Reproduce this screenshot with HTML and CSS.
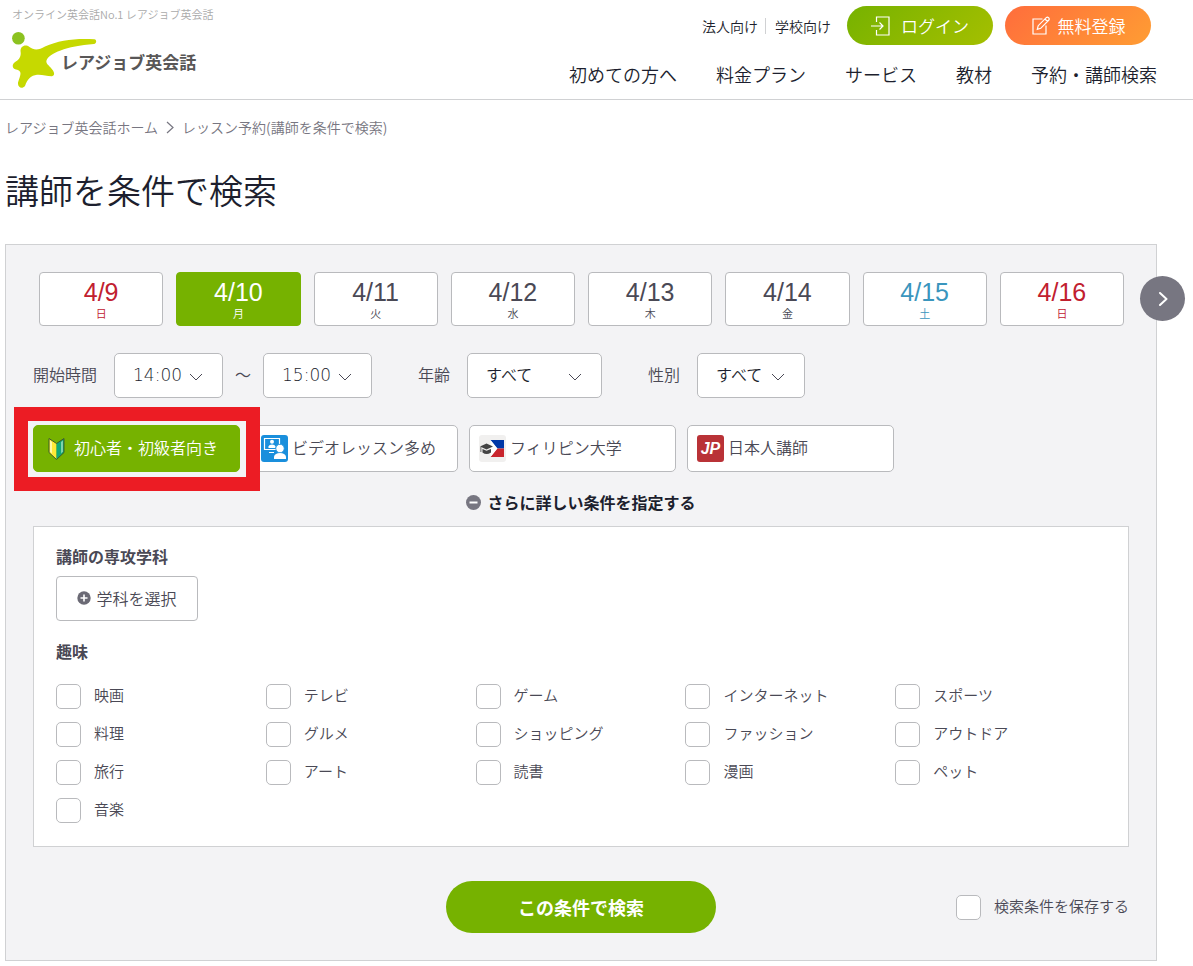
FILE: index.html
```html
<!DOCTYPE html>
<html lang="ja">
<head>
<meta charset="utf-8">
<meta name="viewport" content="width=device-width, initial-scale=1">
<title>レッスン予約(講師を条件で検索)</title>
<link rel="stylesheet" href="styles.css">
</head>
<body>
<header class="header">
  <div class="brand">
    <p class="tagline">オンライン英会話No.1 レアジョブ英会話</p>
    <a class="logo" href="#">
      <svg class="logo-mark" viewBox="12 33 85 56" aria-hidden="true">
        <circle cx="18.4" cy="39.3" r="6.3" fill="#8cc220"/>
        <path fill="#c6d900" d="M94.500 40.300C77 39 59 41 45 47.500C39 51 34 51.500 29.500 48C25 44.800 20.500 47.500 20.500 52C21.500 58 19 60.500 14.500 63.500C11.500 66 12.500 70 16 70.500C20.500 71.300 21.300 73.500 19.800 78L18 83.500C17.500 88.500 22 90.500 25 87C27.500 80 31 76.500 37 75.800C42 75.300 47 77.300 52 77.200C54.800 76.800 54.500 74 53 71.500C49.500 66.500 45.500 65 46.500 61.500C49 54.500 66 47 94 45C96.800 44.500 96.800 40.800 94.500 40.300Z"/>
      </svg>
      <span class="logo-text">レアジョブ英会話</span>
    </a>
  </div>
  <div class="header-right">
    <div class="header-top">
      <a class="sub-link" href="#">法人向け</a>
      <a class="sub-link sub-link-split" href="#">学校向け</a>
      <a class="pill pill-login" href="#">
        <svg width="21" height="20" viewBox="0 0 21 20" fill="none" stroke="currentColor" stroke-width="1.200" aria-hidden="true"><path d="M5.500 6V1H18V19H5.500V14M0 10H12M8.500 6.500L12 10L8.500 13.500"/></svg>
        ログイン
      </a>
      <a class="pill pill-register" href="#">
        <svg width="20" height="20" viewBox="0 0 20 20" fill="none" stroke="currentColor" stroke-width="1.200" aria-hidden="true"><path d="M11.500 3H2V18H15V9.500M6.300 13.300L7.200 9.700L15.500 1.400Q16.500 .700 17.600 1.700Q18.700 2.900 17.900 4L9.700 12.300ZM14 3L16.500 5.500"/></svg>
        無料登録
      </a>
    </div>
    <nav class="nav">
      <a href="#">初めての方へ</a>
      <a href="#">料金プラン</a>
      <a href="#">サービス</a>
      <a href="#">教材</a>
      <a href="#">予約・講師検索</a>
    </nav>
  </div>
</header>

<main class="main">
  <nav class="breadcrumb" aria-label="パンくずリスト">
    <a href="#">レアジョブ英会話ホーム</a>
    <svg width="8" height="13" viewBox="0 0 8 13" fill="none" stroke="currentColor" stroke-width="1.200" aria-hidden="true"><path d="M1 1L7 6.500L1 12"/></svg>
    <span>レッスン予約(講師を条件で検索)</span>
  </nav>
  <h1 class="title">講師を条件で検索</h1>

  <form class="panel">
    <div class="dates">
      <button type="button" class="date holiday"><span class="num">4/9</span><span class="day">日</span></button>
      <button type="button" class="date selected" aria-pressed="true"><span class="num">4/10</span><span class="day">月</span></button>
      <button type="button" class="date"><span class="num">4/11</span><span class="day">火</span></button>
      <button type="button" class="date"><span class="num">4/12</span><span class="day">水</span></button>
      <button type="button" class="date"><span class="num">4/13</span><span class="day">木</span></button>
      <button type="button" class="date"><span class="num">4/14</span><span class="day">金</span></button>
      <button type="button" class="date saturday"><span class="num">4/15</span><span class="day">土</span></button>
      <button type="button" class="date holiday"><span class="num">4/16</span><span class="day">日</span></button>
      <button type="button" class="next" aria-label="次の日程">
        <svg width="10" height="14" viewBox="0 0 10 14" fill="none" stroke="currentColor" stroke-width="2" stroke-linecap="round" stroke-linejoin="round" aria-hidden="true"><path d="M2 1L8.500 7L2 13"/></svg>
      </button>
    </div>

    <div class="filters">
      <div class="filter">
        <label for="start">開始時間</label>
        <span class="select time"><select id="start"><option>14:00</option></select><svg class="chevron" viewBox="0 0 14 8" aria-hidden="true"><path d="M1 1L7 7L13 1"/></svg></span>
        <span class="tilde">～</span>
        <span class="select time"><select id="end" aria-label="終了時間"><option>15:00</option></select><svg class="chevron" viewBox="0 0 14 8" aria-hidden="true"><path d="M1 1L7 7L13 1"/></svg></span>
      </div>
      <div class="filter">
        <label for="age">年齢</label>
        <span class="select wide"><select id="age"><option>すべて</option></select><svg class="chevron" viewBox="0 0 14 8" aria-hidden="true"><path d="M1 1L7 7L13 1"/></svg></span>
      </div>
      <div class="filter">
        <label for="sex">性別</label>
        <span class="select"><select id="sex"><option>すべて</option></select><svg class="chevron" viewBox="0 0 14 8" aria-hidden="true"><path d="M1 1L7 7L13 1"/></svg></span>
      </div>
    </div>

    <div class="chips">
      <div class="chip-slot">
        <button type="button" class="chip selected" aria-pressed="true">
          <svg class="chip-icon" viewBox="0 0 27 27" aria-hidden="true"><path fill="#ffe937" d="M6 3.500L13.500 8.500V24.500L6 17.500Z"/><path fill="#12a878" d="M21 3.500L13.500 8.500V24.500L21 17.500Z"/><path fill="#fff8a8" d="M7 5.500L9 7V18.500L7 16.500Z"/><path fill="#7ed3ae" d="M18 7L20 5.500V16.500L18 18.500Z"/><path fill="none" stroke="#3d5b2d" d="M6 3.500L13.500 8.500L21 3.500V17.500L13.500 24.500L6 17.500Z"/></svg>
          <span class="chip-text">初心者・初級者向き</span>
        </button>
        <span class="highlight"></span>
      </div>
      <button type="button" class="chip">
        <svg class="chip-icon" viewBox="0 0 27 27" aria-hidden="true"><rect width="27" height="27" rx="3" fill="#1a8fdc"/><path fill="none" stroke="#fff" stroke-width="1.200" d="M15 14.500H3.500V3.500H18.500V9M8 17.500H13"/><circle cx="11" cy="6.800" r="2" fill="#fff"/><path fill="#fff" d="M7.500 13V11.500Q8 9.500 11 9.500Q14 9.500 14.500 11.500V13Z"/><circle cx="19" cy="13.500" r="4.200" fill="#fff" stroke="#1a8fdc" stroke-width=".800"/><path fill="#fff" d="M13 24V21.500Q14 18 19 18Q24 18 25 21.500V24Z"/></svg>
        <span class="chip-text">ビデオレッスン多め</span>
      </button>
      <button type="button" class="chip">
        <svg class="chip-icon" viewBox="0 0 27 27" aria-hidden="true"><rect width="27" height="27" rx="3" fill="#f1f0ef"/><path fill="#0038a8" d="M11.500 5H25V13.500H18Z"/><path fill="#c9252d" d="M18 13.500H25V22H11.500Z"/><path fill="#fff" d="M11.500 5L18.500 13.500L11.500 22Z"/><path fill="#444" d="M1 11.500L7.500 8.500L14 11.500L7.500 14.500Z"/><path fill="#444" d="M3.500 14L7.500 15.800L12 14V17.500Q7.500 20.500 3.500 17.500ZM1.500 12H2.300V17H1.500Z"/></svg>
        <span class="chip-text">フィリピン大学</span>
      </button>
      <button type="button" class="chip">
        <span class="chip-icon jp" aria-hidden="true">JP</span>
        <span class="chip-text">日本人講師</span>
      </button>
    </div>

    <button type="button" class="more" aria-expanded="true">
      <svg width="15" height="15" viewBox="0 0 15 15" aria-hidden="true"><circle cx="7.500" cy="7.500" r="7.500" fill="#777681"/><path stroke="#fff" stroke-width="2" d="M3.500 7.500H11.500"/></svg>
      さらに詳しい条件を指定する
    </button>

    <div class="details">
      <h2 class="subhead">講師の専攻学科</h2>
      <button type="button" class="major">
        <svg width="14" height="14" viewBox="0 0 14 14" aria-hidden="true"><circle cx="7" cy="7" r="6.700" fill="#6b6a75"/><path stroke="#fff" stroke-width="1.600" d="M3.500 7H10.500M7 3.500V10.500"/></svg>
        学科を選択
      </button>
      <h2 class="subhead hobby-head">趣味</h2>
      <div class="hobbies">
        <label class="check"><input type="checkbox">映画</label>
        <label class="check"><input type="checkbox">テレビ</label>
        <label class="check"><input type="checkbox">ゲーム</label>
        <label class="check"><input type="checkbox">インターネット</label>
        <label class="check"><input type="checkbox">スポーツ</label>
        <label class="check"><input type="checkbox">料理</label>
        <label class="check"><input type="checkbox">グルメ</label>
        <label class="check"><input type="checkbox">ショッピング</label>
        <label class="check"><input type="checkbox">ファッション</label>
        <label class="check"><input type="checkbox">アウトドア</label>
        <label class="check"><input type="checkbox">旅行</label>
        <label class="check"><input type="checkbox">アート</label>
        <label class="check"><input type="checkbox">読書</label>
        <label class="check"><input type="checkbox">漫画</label>
        <label class="check"><input type="checkbox">ペット</label>
        <label class="check"><input type="checkbox">音楽</label>
      </div>
    </div>

    <div class="actions">
      <button type="submit" class="search">この条件で検索</button>
      <label class="check save"><input type="checkbox">検索条件を保存する</label>
    </div>
  </form>
</main>
</body>
</html>
```

FILE: styles.css
```css
* {
  box-sizing: border-box;
}

body {
  margin: 0;
  background: #fff;
  color: #4a4955;
  font-family: "Noto Sans CJK JP", sans-serif;
  font-size: 16px;
  font-weight: 350;
  line-height: 24px;
}

a {
  color: inherit;
  text-decoration: none;
}

button,
select {
  margin: 0;
  padding: 0;
  font: inherit;
  color: inherit;
  cursor: pointer;
}

svg {
  flex: none;
}

/* Header */
.header {
  display: flex;
  justify-content: space-between;
  padding: 6px 36px 11px 12px;
  border-bottom: 1px solid #d0d1d3;
}

.tagline {
  margin: 0;
  color: #aaa;
  font-size: 11px;
  line-height: 16px;
}

.logo {
  display: grid;
  align-items: center;
  margin-top: 10px;
}

.logo-mark,
.logo-text {
  grid-area: 1 / 1;
}

.logo-mark {
  width: 85px;
  height: 56px;
}

.logo-text {
  padding: 4px 0 0 49px;
  color: #595757;
  font-size: 17px;
  font-weight: 700;
}

.header-right {
  display: flex;
  flex-direction: column;
  gap: 17px;
  color: #1d1f2e;
}

.header-top {
  display: flex;
  align-items: center;
  justify-content: flex-end;
  padding-right: 6px;
}

.sub-link {
  font-size: 14px;
  line-height: 16px;
}

.sub-link-split {
  margin: 0 16px 0 7px;
  padding-left: 9px;
  border-left: 1px solid #d0d1d3;
}

.pill {
  display: flex;
  align-items: center;
  justify-content: center;
  gap: 9px;
  width: 146px;
  height: 39px;
  border-radius: 20px;
  color: #fff;
  font-size: 17px;
}

.pill-login {
  background: linear-gradient(135deg, #76b200, #a5bf00);
}

.pill-register {
  gap: 7px;
  margin-left: 12px;
  background: linear-gradient(135deg, #ff6d3c, #ff9d33);
}

.nav {
  display: flex;
  justify-content: flex-end;
  gap: 39px;
  font-size: 18px;
}

/* Main */
.main {
  padding: 15px 36px 5px 5px;
}

.breadcrumb {
  display: flex;
  align-items: center;
  gap: 8px;
  color: #777681;
  font-size: 14px;
}

.title {
  margin: 28px 0 32px;
  color: #1d1f2e;
  font-size: 34px;
  font-weight: 350;
  line-height: 45px;
}

.panel {
  padding: 27px;
  border: 1px solid #d0d1d3;
  background: #f3f3f5;
}

/* Dates */
.dates {
  position: relative;
  display: grid;
  grid-template-columns: repeat(8, 1fr);
  gap: 13px;
  padding: 0 5px 0 6px;
}

.date {
  display: flex;
  flex-direction: column;
  align-items: center;
  height: 54px;
  padding-top: 5px;
  border: 1px solid #b9babd;
  border-radius: 4px;
  background: #fff;
}

.num {
  font-family: "Liberation Sans", sans-serif;
  font-size: 25px;
  line-height: 29px;
}

.day {
  font-size: 11px;
  line-height: 12px;
}

.date.holiday {
  color: #c1202f;
}

.date.saturday {
  color: #3a95bd;
}

.chip.selected,
.date.selected {
  border-color: #76b200;
  background: #76b200;
  color: #fff;
}

.next {
  position: absolute;
  top: 4px;
  right: -56px;
  display: flex;
  align-items: center;
  justify-content: center;
  width: 45px;
  height: 45px;
  border: 0;
  border-radius: 50%;
  background: #777681;
  color: #fff;
}

/* Selects */
.filters {
  display: flex;
  gap: 46px;
  margin-top: 27px;
}

.filter {
  display: flex;
  align-items: center;
}

.filter label {
  margin-right: 17px;
  padding-bottom: 4px;
}

.select {
  position: relative;
  width: 108px;
}

.select.time {
  width: 109px;
  font-family: "DejaVu Sans", sans-serif;
  font-size: 17px;
}

.select.wide {
  width: 135px;
}

.select select {
  display: block;
  width: 100%;
  height: 45px;
  padding: 0 0 4px 18px;
  border: 1px solid #b9babd;
  border-radius: 5px;
  appearance: none;
  background: #fff;
  color: #1d1f2e;
}

.select.time select {
  padding-bottom: 2px;
}

.chevron {
  position: absolute;
  top: 20px;
  right: 20px;
  width: 14px;
  height: 8px;
  fill: none;
  stroke: #4a4955;
  pointer-events: none;
}

.tilde {
  width: 40px;
  padding-bottom: 4px;
  text-align: center;
}

/* Feature chips */
.chips {
  display: flex;
  gap: 11px;
  margin-top: 27px;
}

.chip-slot {
  position: relative;
}

.chip {
  display: flex;
  align-items: center;
  gap: 4px;
  width: 207px;
  height: 47px;
  padding-left: 9px;
  border: 1px solid #b9babd;
  border-radius: 5px;
  background: #fff;
}

.chip-icon {
  width: 27px;
  height: 27px;
}

.chip-text {
  padding-bottom: 3px;
}

.jp {
  border-radius: 3px;
  background: #b93237;
  color: #fff;
  font-family: "Liberation Sans", sans-serif;
  font-size: 16px;
  font-style: italic;
  font-weight: 700;
  line-height: 28px;
  text-align: center;
}

.highlight {
  position: absolute;
  inset: -18px -20px -19px -19px;
  border: 14px solid #ec1c24;
  pointer-events: none;
}

.more {
  display: flex;
  align-items: center;
  gap: 6px;
  margin: 18px auto 12px;
  border: 0;
  background: none;
  color: #1d1f2e;
  font-weight: 700;
}

/* Detailed conditions */
.details {
  padding: 17px 23px 23px 22px;
  border: 1px solid #d0d1d3;
  background: #fff;
}

.subhead {
  margin: 0;
  font-size: 16px;
  font-weight: 700;
}

.major {
  display: flex;
  align-items: center;
  justify-content: center;
  gap: 5px;
  width: 142px;
  height: 45px;
  margin-top: 8px;
  padding-bottom: 2px;
  border: 1px solid #b9babd;
  border-radius: 4px;
  background: #fff;
}

.hobby-head {
  margin-top: 18px;
}

.hobbies {
  display: grid;
  grid-template-columns: repeat(5, 1fr);
  row-gap: 13px;
  margin-top: 21px;
}

.check {
  display: flex;
  align-items: flex-start;
  gap: 13px;
  font-size: 15px;
  line-height: 22px;
}

.check input {
  width: 25px;
  height: 25px;
  margin: 0;
  border: 1px solid #b9babd;
  border-radius: 5px;
  appearance: none;
  background: #fff;
}

/* Actions */
.actions {
  display: grid;
  grid-template-columns: 1fr auto 1fr;
  align-items: center;
  margin-top: 34px;
}

.search {
  grid-column: 2;
  width: 270px;
  height: 52px;
  border: 0;
  border-radius: 26px;
  background: #76b200;
  color: #fff;
  font-size: 18px;
  font-weight: 700;
}

.save {
  justify-self: end;
}
```
